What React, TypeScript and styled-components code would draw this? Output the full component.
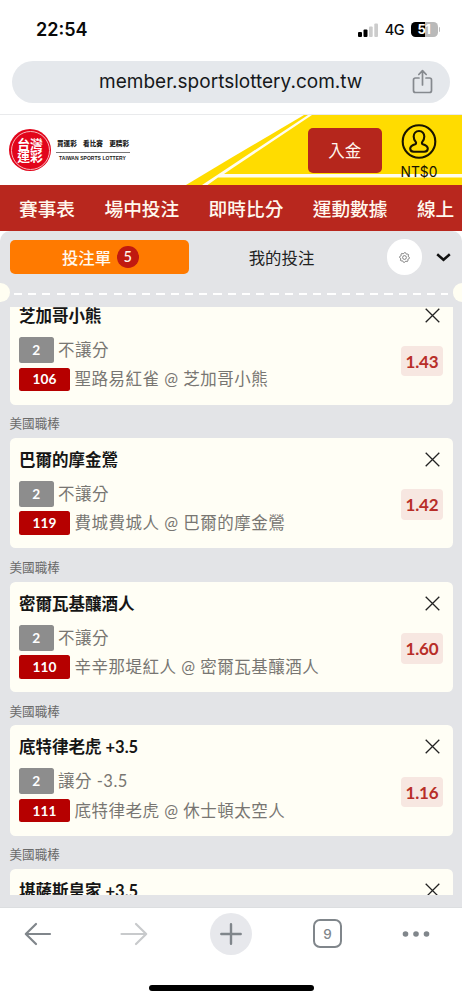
import React from 'react';
import styled, { createGlobalStyle } from 'styled-components';

const cjk = `"Noto Sans CJK TC", sans-serif`;
const ui = `Inter, ${cjk}`;

const GlobalStyle = createGlobalStyle`
  * { box-sizing: border-box; }
  body { margin: 0; background: #fff; font-family: Lato, ${cjk}; }
  button { border: 0; padding: 0; background: none; font: inherit; color: inherit; }
`;

const Screen = styled.div`
  width: 462px;
  height: 1000px;
  display: flex;
  flex-direction: column;
  overflow: hidden;
  background: #fff;
`;

const StatusBar = styled.div`
  height: 60px;
  flex: none;
  display: flex;
  align-items: center;
  justify-content: space-between;
  padding: 0 22px 1px 36px;
  font-family: ${ui};
  color: #0a0a0a;
`;

const Clock = styled.span`
  font-size: 18px;
  font-weight: 600;
  letter-spacing: 0;
`;

const Signals = styled.div`
  display: flex;
  align-items: center;
  gap: 6.5px;
  font-size: 14.5px;
  font-weight: 500;
  letter-spacing: -0.5px;
`;

const Battery = styled.div`
  display: flex;
  align-items: center;
  gap: 1px;
  &::after {
    content: '';
    width: 1.5px;
    height: 5px;
    border-radius: 0 2px 2px 0;
    background: #bdbdbd;
  }
`;

const BatteryLevel = styled.span`
  width: 27px;
  height: 15px;
  border-radius: 4.5px;
  background: linear-gradient(90deg, #000 52%, #b9b9b9 52%);
  color: #fff;
  font-size: 13px;
  font-weight: 700;
  line-height: 15px;
  text-align: center;
`;

const AddressRow = styled.div`
  height: 55px;
  flex: none;
  padding: 0.5px 12px 0;
  border-bottom: 1px solid #e9eaec;
`;

const AddressPill = styled.div`
  height: 42px;
  border-radius: 21px;
  background: #e5e8ec;
  display: flex;
  align-items: center;
  justify-content: space-between;
  padding: 0 17px 0 87px;
  font-family: ${ui};
  font-size: 19px;
  letter-spacing: 0.01px;
  color: #16181b;
`;

const SiteHeader = styled.header`
  position: relative;
  height: 70px;
  flex: none;
  display: flex;
  padding-left: 9px;
`;

const HeaderArt = styled.svg`
  position: absolute;
  inset: 0;
`;

const Logo = styled.div`
  position: relative;
  width: 42px;
  height: 42px;
  margin-top: 14px;
  border-radius: 50%;
  background: #e2051b;
  display: flex;
  align-items: center;
  justify-content: center;
  &::after {
    content: '';
    position: absolute;
    inset: 1.5px;
    border: 0.8px solid #f7b5bb;
    border-radius: 50%;
  }
`;

const LogoText = styled.div`
  width: 27px;
  font-family: ${cjk};
  font-size: 12.8px;
  font-weight: 700;
  line-height: 12.5px;
  color: #fff;
  text-align: center;
`;

const Slogan = styled.div`
  position: relative;
  width: 74px;
  margin: 22px 0 0 5px;
  font-family: ${cjk};
  color: #222;
  text-align: center;
`;

const SloganMain = styled.div`
  display: flex;
  justify-content: space-between;
  padding: 0 1px;
  height: 16px;
  border-bottom: 0.8px solid #777;
  font-size: 6.6px;
  font-weight: 900;
  line-height: 13px;
`;

const SloganSub = styled.div`
  font-family: "Liberation Sans", sans-serif;
  font-size: 5px;
  font-weight: 700;
  line-height: 10px;
  letter-spacing: 0.05px;
  white-space: nowrap;
  margin-left: -1px;
`;

const Deposit = styled.button`
  position: relative;
  width: 73.5px;
  height: 45px;
  margin: 12.5px 0 0 178px;
  border-radius: 5px;
  background: #b5261c;
  color: #fff6ee;
  font-family: ${cjk};
  font-size: 16.5px;
  line-height: 44px;
`;

const Account = styled.div`
  position: relative;
  width: 44px;
  margin: 9px 0 0 15.5px;
  display: flex;
  flex-direction: column;
  align-items: center;
  font-family: ${ui};
  font-size: 13.8px;
  line-height: 17px;
  color: #171300;
`;

const AccountIcon = styled.svg`
  flex: none;
  margin-bottom: 5px;
`;

const Nav = styled.nav`
  height: 46px;
  flex: none;
  display: flex;
  gap: 29.4px;
  padding-left: 19px;
  overflow: hidden;
  background: #b8271e;
  color: #fff8ee;
  font-family: ${cjk};
  font-size: 18.7px;
  font-weight: 500;
  line-height: 45px;
  white-space: nowrap;
`;

const Panel = styled.main`
  height: 676px;
  flex: none;
  display: flex;
  flex-direction: column;
  border-radius: 10px 10px 0 0;
  background: #e3e4e7;
`;

const Tabs = styled.div`
  height: 52px;
  flex: none;
  display: flex;
  align-items: center;
  padding: 0 9.5px;
  font-size: 16.4px;
`;

const Tab = styled.button<{ $active?: boolean }>`
  width: ${p => (p.$active ? 179.5 : 185)}px;
  height: 33.5px;
  padding-left: ${p => (p.$active ? 2 : 0)}px;
  border-radius: 5px;
  display: flex;
  align-items: center;
  justify-content: center;
  gap: 6px;
  background: ${p => (p.$active ? '#ff7a00' : 'transparent')};
  color: ${p => (p.$active ? '#fff8ee' : '#222')};
  font-family: ${cjk};
  font-weight: ${p => (p.$active ? 500 : 400)};
`;

const Count = styled.span`
  width: 21.5px;
  height: 21.5px;
  border-radius: 50%;
  background: #c01a10;
  font-family: Lato, sans-serif;
  font-size: 14.5px;
  line-height: 21.5px;
  text-align: center;
`;

const Settings = styled.button`
  width: 35.5px;
  height: 35.5px;
  margin: 0 14px 0 12.5px;
  border-radius: 50%;
  background: #fff;
  display: flex;
  align-items: center;
  justify-content: center;
`;

const Perforation = styled.div`
  height: 24px;
  flex: none;
  display: flex;
  align-items: flex-start;
  justify-content: space-between;
  overflow: hidden;
`;

const Notch = styled.span<{ $right?: boolean }>`
  width: 9.5px;
  height: 19px;
  border-radius: ${p => (p.$right ? '10px 0 0 10px' : '0 10px 10px 0')};
  background: #fffef2;
`;

const Dashes = styled.span`
  width: 434px;
  height: 2px;
  margin: 10px 5px 0 4px;
  flex: none;
  background: repeating-linear-gradient(90deg, #fff 0 8px, transparent 8px 14.25px);
`;

const BetList = styled.section`
  height: 587.5px;
  flex: none;
  padding: 0 9.5px;
  overflow: hidden;
`;

const Bets = styled.div`
  margin-top: -13px;
`;

const League = styled.div`
  height: 33.3px;
  padding-top: 2.5px;
  font-family: ${cjk};
  font-size: 12.6px;
  line-height: 31px;
  color: #6a6a6a;
`;

const Card = styled.article`
  height: 110.5px;
  border-radius: 5.5px;
  background: #fffef5;
  padding: 0 9.5px;
  display: flex;
  justify-content: space-between;
`;

const Pick = styled.div`
  display: flex;
  flex-direction: column;
`;

const Team = styled.div`
  height: 43px;
  font-size: 16.5px;
  font-weight: 700;
  line-height: 44px;
  color: #161616;
`;

const Line = styled.div<{ $height: number }>`
  height: ${p => p.$height}px;
  display: flex;
  align-items: center;
  gap: 4.5px;
  margin-bottom: 4.5px;
  font-size: 16.5px;
  line-height: 24px;
  font-weight: 400;
  letter-spacing: 0.5px;
  color: #787672;
  white-space: nowrap;
`;

const Tag = styled.span<{ $red?: boolean }>`
  width: ${p => (p.$red ? 51 : 34.5)}px;
  height: 100%;
  border-radius: 2.5px;
  display: flex;
  align-items: center;
  justify-content: center;
  background: ${p => (p.$red ? '#b60000' : '#8d8d8d')};
  color: #fff;
  font-size: 13.7px;
  font-weight: 700;
  letter-spacing: 0;
`;

const Side = styled.div`
  display: flex;
  flex-direction: column;
  align-items: flex-end;
`;

const Close = styled.svg`
  margin: 14px 3px 0 0;
  flex: none;
`;

const Odds = styled.span`
  width: 42px;
  height: 30.5px;
  margin: 22.5px 0 0;
  border-radius: 4px;
  background: #f7e7e1;
  color: #b82e28;
  font-size: 17px;
  font-weight: 700;
  line-height: 31px;
  letter-spacing: -0.2px;
  text-align: center;
`;

const Toolbar = styled.footer`
  height: 93px;
  flex: none;
  border-top: 1px solid #dcdee0;
  display: flex;
  flex-direction: column;
  align-items: center;
  justify-content: space-between;
  padding-bottom: 9.5px;
`;

const Tools = styled.div`
  width: 100%;
  height: 51px;
  display: grid;
  grid-template-columns: 76px 116px 78px 115px 61px;
  align-items: center;
  justify-items: center;
`;

const NewTab = styled.button`
  width: 42px;
  height: 42px;
  border-radius: 50%;
  background: #e7e8ec;
  display: flex;
  align-items: center;
  justify-content: center;
`;

const TabCount = styled.button`
  width: 29px;
  height: 29px;
  border: 2px solid #80868b;
  border-radius: 7px;
  font-family: ${ui};
  font-size: 13.5px;
  font-weight: 500;
  color: #80868b;
  display: flex;
  align-items: center;
  justify-content: center;
`;

const HomeIndicator = styled.div`
  width: 165px;
  height: 6px;
  border-radius: 3px;
  background: #000;
`;

type Bet = { team: string; market: string; code: string; game: string; odds: string };

const bets: Bet[] = [
  { team: '芝加哥小熊', market: '不讓分', code: '106', game: '聖路易紅雀 @ 芝加哥小熊', odds: '1.43' },
  { team: '巴爾的摩金鶯', market: '不讓分', code: '119', game: '費城費城人 @ 巴爾的摩金鶯', odds: '1.42' },
  { team: '密爾瓦基釀酒人', market: '不讓分', code: '110', game: '辛辛那堤紅人 @ 密爾瓦基釀酒人', odds: '1.60' },
  { team: '底特律老虎 +3.5', market: '讓分 -3.5', code: '111', game: '底特律老虎 @ 休士頓太空人', odds: '1.16' },
];

const CloseIcon = () => (
  <Close width="15" height="15" viewBox="0 0 15 15" stroke="#222" strokeWidth="1.3">
    <path d="M.7.7l13.6 13.6M14.3.7L.7 14.3" />
  </Close>
);

const BetCard = ({ bet }: { bet: Bet }) => (
  <>
    <Card>
      <Pick>
        <Team>{bet.team}</Team>
        <Line $height={26}><Tag>2</Tag>{bet.market}</Line>
        <Line $height={23.5}><Tag $red>{bet.code}</Tag>{bet.game}</Line>
      </Pick>
      <Side>
        <CloseIcon />
        <Odds>{bet.odds}</Odds>
      </Side>
    </Card>
    <League>美國職棒</League>
  </>
);

const gearPoints = Array.from({ length: 32 }, (_, i) => {
  const r = i % 4 < 2 ? 4.9 : 4.0;
  const a = (i / 32) * Math.PI * 2;
  return `${(5.5 + r * Math.cos(a)).toFixed(2)},${(5.5 + r * Math.sin(a)).toFixed(2)}`;
}).join(' ');

export default function App() {
  return (
    <Screen>
      <GlobalStyle />
      <StatusBar>
        <Clock>22:54</Clock>
        <Signals>
          <svg width="20" height="14" viewBox="0 0 20 14">
            <rect x="0" y="9" width="4" height="5" rx="1" fill="#000" />
            <rect x="5.5" y="6.5" width="4" height="7.5" rx="1" fill="#000" />
            <rect x="11" y="3.5" width="3.7" height="10.5" rx="1" fill="#ccc" />
            <rect x="16.3" y="0.5" width="3.7" height="13.5" rx="1" fill="#ccc" />
          </svg>
          <span>4G</span>
          <Battery><BatteryLevel>51</BatteryLevel></Battery>
        </Signals>
      </StatusBar>

      <AddressRow>
        <AddressPill>
          <span>member.sportslottery.com.tw</span>
          <svg width="21" height="25" viewBox="0 0 21 25" fill="none" stroke="#85898e" strokeWidth="1.7" strokeLinecap="round" strokeLinejoin="round">
            <path d="M7 9H3.5A2 2 0 0 0 1.5 11v10.5a2 2 0 0 0 2 2h14a2 2 0 0 0 2-2V11a2 2 0 0 0-2-2H14M10.5 16V1.8M6.8 5.5l3.7-3.8 3.7 3.8" />
          </svg>
        </AddressPill>
      </AddressRow>

      <SiteHeader>
        <HeaderArt width="462" height="70" viewBox="0 0 462 70">
          <path d="M304 0H462V70H186L231 43Z" fill="#ffdc00" />
          <path d="M308 0H312L232 53.5L224 59H462V62.4H218L207.5 70H202L230 51.5Z" fill="#fffdf0" />
        </HeaderArt>
        <Logo><LogoText>台灣運彩</LogoText></Logo>
        <Slogan>
          <SloganMain><span>買運彩</span><span>看比賽</span><span>更精彩</span></SloganMain>
          <SloganSub>TAIWAN SPORTS LOTTERY</SloganSub>
        </Slogan>
        <Deposit>入金</Deposit>
        <Account>
          <AccountIcon width="36" height="35" viewBox="0 0 36 35" fill="none" stroke="#1a1500" strokeWidth="2.1">
            <circle cx="18" cy="17.5" r="16.3" />
            <path d="M18 7c-3.3 0-5.3 2.4-5.3 5.6 0 2.4.9 4.2 2.1 5.4.6.9.2 1.8-.7 2.2-3.3 1.2-4.9 2.3-4.9 4.4 0 2.4 1.7 3.2 3.6 3.2h10.4c1.9 0 3.6-.8 3.6-3.2 0-2.1-1.6-3.2-4.900-4.400-.9-.4-1.300-1.300-.7-2.200 1.200-1.200 2.100-3 2.100-5.400C23.300 9.400 21.300 7 18 7Z" />
          </AccountIcon>
          <span>NT$0</span>
        </Account>
      </SiteHeader>

      <Nav>
        <span>賽事表</span><span>場中投注</span><span>即時比分</span><span>運動數據</span><span>線上</span>
      </Nav>

      <Panel>
        <Tabs>
          <Tab $active>投注單<Count>5</Count></Tab>
          <Tab>我的投注</Tab>
          <Settings>
            <svg width="11" height="11" viewBox="0 0 11 11" fill="none" stroke="#555" strokeWidth=".7">
              <polygon points={gearPoints} />
              <circle cx="5.5" cy="5.5" r="1.9" />
            </svg>
          </Settings>
          <svg width="15" height="9" viewBox="0 0 15 9" fill="none" stroke="#111" strokeWidth="2.5">
            <path d="M1.2 1.3l6.3 5.5 6.3-5.5" />
          </svg>
        </Tabs>
        <Perforation><Notch /><Dashes /><Notch $right /></Perforation>
        <BetList>
          <Bets>
            {bets.map(bet => <BetCard key={bet.code} bet={bet} />)}
            <Card>
              <Team>堪薩斯皇家 +3.5</Team>
              <CloseIcon />
            </Card>
          </Bets>
        </BetList>
      </Panel>

      <Toolbar>
        <Tools>
          <svg width="28" height="24" viewBox="0 0 28 24" fill="none" stroke="#80868b" strokeWidth="2.2" strokeLinecap="round" strokeLinejoin="round">
            <path d="M26 12H2.500M12 2L1.800 12 12 22" />
          </svg>
          <svg width="28" height="24" viewBox="0 0 28 24" fill="none" stroke="#c8cacc" strokeWidth="2.2" strokeLinecap="round" strokeLinejoin="round">
            <path d="M1.500 12H25.500M16 2l10.200 10L16 22" />
          </svg>
          <NewTab>
            <svg width="22" height="22" viewBox="0 0 22 22" stroke="#80868b" strokeWidth="2.4" strokeLinecap="round">
              <path d="M11 1.300v19.400M1.300 11h19.400" />
            </svg>
          </NewTab>
          <TabCount>9</TabCount>
          <svg width="28" height="8" viewBox="0 0 28 8" fill="#80868b">
            <circle cx="3.500" cy="4" r="2.800" /><circle cx="14" cy="4" r="2.800" /><circle cx="24.500" cy="4" r="2.800" />
          </svg>
        </Tools>
        <HomeIndicator />
      </Toolbar>
    </Screen>
  );
}
